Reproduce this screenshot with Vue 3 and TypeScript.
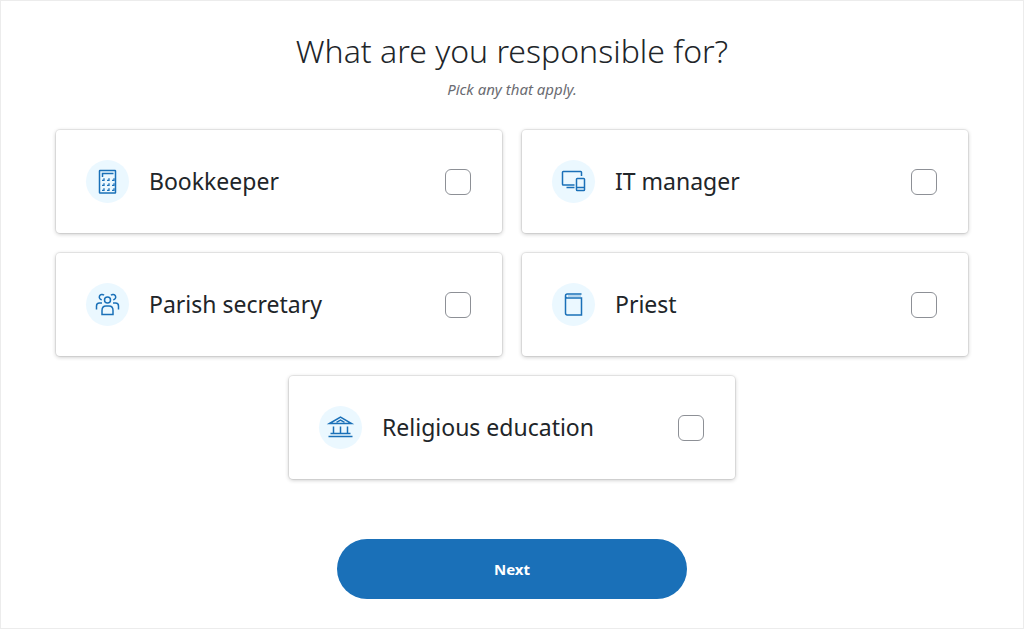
<script setup lang="ts">
import { ref } from 'vue'

interface Role {
  id: string
  label: string
}

const roles: Role[] = [
  { id: 'bookkeeper', label: 'Bookkeeper' },
  { id: 'it', label: 'IT manager' },
  { id: 'secretary', label: 'Parish secretary' },
  { id: 'priest', label: 'Priest' },
  { id: 'education', label: 'Religious education' },
]

const selected = ref<string[]>([])
</script>

<template>
  <main class="page">
    <h1 class="title">What are you responsible for?</h1>
    <p class="hint">Pick any that apply.</p>
    <form class="form" @submit.prevent>
      <div class="cards">
        <label v-for="role in roles" :key="role.id" class="card" :for="role.id">
          <span class="badge">
            <svg class="icon" viewBox="0 0 43 43" aria-hidden="true">
              <g v-if="role.id === 'bookkeeper'">
                <rect x="13.5" y="10.5" width="16" height="22.5" rx="0.5" />
                <path d="M16.5 17V13.5H27.5" />
                <path class="thin" d="M16 20.3h2v-2M21 20.3h2v-2M26 20.3h2v-2M16 25.300h2v-2M21 25.300h2v-2M26 25.300h2v-2M16 30.300h2v-2M21 30.300h2v-2M26 30.300h2v-2" />
              </g>
              <g v-else-if="role.id === 'it'">
                <path d="M22.500 25H11.300q-.8 0-.8-.8V12.300q0-.8.8-.8h17.400q.8 0 .8.8V16M14.500 27.500h8" />
                <rect x="24.500" y="18.500" width="8" height="12" rx="0.8" />
                <path d="M25 27.500h7" />
              </g>
              <g v-else-if="role.id === 'secretary'">
                <circle cx="21.500" cy="17" r="3" />
                <path d="M16 31.500V27.500q0-4.500 4-4.500h3q4 0 4 4.500v4zM18 12.300A2.700 2.700 0 1 0 15.800 16.800M25 12.300A2.700 2.700 0 1 1 27.200 16.800M10.500 26.500v-3.500q0-3 3-3h2.500M32.500 26.500v-3.500q0-3-3-3H27" />
              </g>
              <g v-else-if="role.id === 'priest'">
                <path d="M29.500 11H15.200q-1.700 0-1.700 2v17q0 2 1.700 2h14.300V15H15.200q-1.700 0-1.700-2" />
                <path class="faint" d="M16 13h13" />
              </g>
              <g v-else>
                <path d="M10.500 17.500L21.500 11l11 6.500z" />
                <path d="M17.500 16.300l4-2.100 4 2.100M14.500 20.500v7M21.500 20.500v7M28.500 20.500v7M11.500 27.500h20M9.500 30.500h24" />
              </g>
            </svg>
          </span>
          <span class="label">{{ role.label }}</span>
          <input :id="role.id" v-model="selected" class="check" type="checkbox" :value="role.id" />
        </label>
      </div>
      <button class="next" type="submit">Next</button>
    </form>
  </main>
</template>

<style>
body {
  margin: 0;
  background: #fff;
}
</style>

<style scoped>
.page {
  box-sizing: border-box;
  min-height: 100vh;
  padding: 28px 55px;
  border: 1px solid #ececec;
  font-family: "Noto Sans", "Open Sans", sans-serif;
  color: #212529;
  text-align: center;
}

.title {
  margin: 0;
  font-size: 32px;
  line-height: 44px;
  font-weight: 350;
}

.hint {
  margin: 5px 0 29px;
  font-size: 15px;
  line-height: 23px;
  font-style: italic;
  color: #6b6c72;
}

.form {
  display: flex;
  flex-direction: column;
  align-items: center;
  gap: 60px;
}

.cards {
  display: flex;
  flex-wrap: wrap;
  justify-content: center;
  gap: 20px;
  width: 100%;
}

.card {
  box-sizing: border-box;
  display: flex;
  align-items: center;
  flex: 0 0 calc(50% - 10px);
  padding: 30px 31px 30px 30px;
  border-radius: 4px;
  background: #fff;
  box-shadow: 0 0 0 1px rgba(0, 0, 0, 0.06), 0 1px 4px rgba(0, 0, 0, 0.24);
  cursor: pointer;
}

.badge {
  flex: none;
  width: 43px;
  height: 43px;
  border-radius: 50%;
  background: #ebf8ff;
}

.icon {
  display: block;
  width: 43px;
  height: 43px;
  fill: none;
  stroke: #1a70b8;
  stroke-width: 1.5;
}

.thin {
  stroke-width: 1.3;
}

.faint {
  stroke-width: 1;
  stroke-opacity: 0.5;
}

.label {
  flex: 1;
  margin-left: 20px;
  font-size: 23px;
  line-height: 31px;
  text-align: left;
}

.check {
  appearance: none;
  flex: none;
  box-sizing: border-box;
  width: 26px;
  height: 26px;
  margin: 0;
  border: 1px solid #8d9096;
  border-radius: 6px;
  background: #fff;
}

.check:checked {
  background: #1a70b8;
}

.next {
  width: 350px;
  max-width: 100%;
  height: 60px;
  border: 0;
  border-radius: 30px;
  background: #1a70b8;
  color: #fff;
  font-family: "Noto Sans", sans-serif;
  font-size: 15px;
  font-weight: 700;
  cursor: pointer;
}
</style>
